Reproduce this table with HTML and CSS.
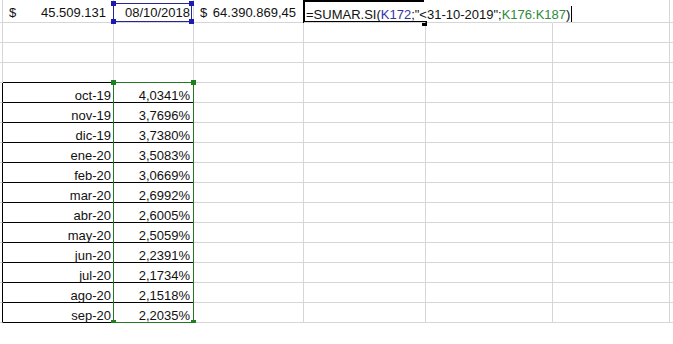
FILE: index.html
```html
<!DOCTYPE html>
<html lang="es">
<head>
<meta charset="utf-8">
<title>Hoja</title>
<link rel="stylesheet" href="styles.css">
</head>
<body>
<div class="sheet">
  <!-- row 1 -->
  <div class="c s top"></div>
  <div class="c top acct"><span>$</span><span>45.509.131</span></div>
  <div class="c top r">08/10/2018</div>
  <div class="c top acct"><span>$</span><span>64.390.869,45</span></div>
  <div class="c top edit noright">=SUMAR.SI(<span class="ref-blue">K172</span>;"&lt;31-10-2019";<span class="ref-green">K176:K187</span>)<span class="caret"></span></div>
  <div class="c top noright"></div>
  <div class="c top"></div>
  <div class="c top"></div>
  <!-- row 2 -->
  <div class="c s"></div><div class="c"></div><div class="c"></div><div class="c"></div><div class="c"></div><div class="c"></div><div class="c"></div><div class="c"></div>
  <!-- row 3 -->
  <div class="c s"></div><div class="c"></div><div class="c"></div><div class="c"></div><div class="c"></div><div class="c"></div><div class="c"></div><div class="c"></div>
  <!-- row 4 -->
  <div class="c s"></div><div class="c above"></div><div class="c above"></div><div class="c"></div><div class="c"></div><div class="c"></div><div class="c"></div><div class="c"></div>
  <!-- table rows -->
  <div class="c s edge"></div><div class="c t r lbl">oct-19</div><div class="c t r pct">4,0341%</div><div class="c"></div><div class="c"></div><div class="c"></div><div class="c"></div><div class="c"></div>
  <div class="c s edge"></div><div class="c t r lbl">nov-19</div><div class="c t r pct">3,7696%</div><div class="c"></div><div class="c"></div><div class="c"></div><div class="c"></div><div class="c"></div>
  <div class="c s edge"></div><div class="c t r lbl">dic-19</div><div class="c t r pct">3,7380%</div><div class="c"></div><div class="c"></div><div class="c"></div><div class="c"></div><div class="c"></div>
  <div class="c s edge"></div><div class="c t r lbl">ene-20</div><div class="c t r pct">3,5083%</div><div class="c"></div><div class="c"></div><div class="c"></div><div class="c"></div><div class="c"></div>
  <div class="c s edge"></div><div class="c t r lbl">feb-20</div><div class="c t r pct">3,0669%</div><div class="c"></div><div class="c"></div><div class="c"></div><div class="c"></div><div class="c"></div>
  <div class="c s edge"></div><div class="c t r lbl">mar-20</div><div class="c t r pct">2,6992%</div><div class="c"></div><div class="c"></div><div class="c"></div><div class="c"></div><div class="c"></div>
  <div class="c s edge"></div><div class="c t r lbl">abr-20</div><div class="c t r pct">2,6005%</div><div class="c"></div><div class="c"></div><div class="c"></div><div class="c"></div><div class="c"></div>
  <div class="c s edge"></div><div class="c t r lbl">may-20</div><div class="c t r pct">2,5059%</div><div class="c"></div><div class="c"></div><div class="c"></div><div class="c"></div><div class="c"></div>
  <div class="c s edge"></div><div class="c t r lbl">jun-20</div><div class="c t r pct">2,2391%</div><div class="c"></div><div class="c"></div><div class="c"></div><div class="c"></div><div class="c"></div>
  <div class="c s edge"></div><div class="c t r lbl">jul-20</div><div class="c t r pct">2,1734%</div><div class="c"></div><div class="c"></div><div class="c"></div><div class="c"></div><div class="c"></div>
  <div class="c s edge"></div><div class="c t r lbl">ago-20</div><div class="c t r pct">2,1518%</div><div class="c"></div><div class="c"></div><div class="c"></div><div class="c"></div><div class="c"></div>
  <div class="c s edge"></div><div class="c t r lbl">sep-20</div><div class="c t r pct">2,2035%</div><div class="c"></div><div class="c"></div><div class="c"></div><div class="c"></div><div class="c"></div>

  <!-- overlays -->
  <div class="hl hl-blue"><span class="h tl"></span><span class="h tr"></span><span class="h bl"></span><span class="h br"></span></div>
  <div class="hl hl-green"><span class="h tl"></span><span class="h tr"></span><span class="h bl"></span><span class="h br"></span></div>
  <div class="edit-box"><span class="fill-handle"></span></div>
</div>
</body>
</html>
```

FILE: styles.css
```css
html, body {
  margin: 0;
  padding: 0;
  background: #ffffff;
}

body {
  font-family: "Liberation Sans", Arial, sans-serif;
  font-size: 13px;
  color: #111111;
}

.sheet {
  position: relative;
  display: grid;
  grid-template-columns: 3px 111px 80px 110px 122px 127px 117px 1fr;
  grid-template-rows: 23px repeat(15, 20px);
}

.c {
  box-sizing: border-box;
  border-right: 1px solid #d6d6d6;
  border-bottom: 1px solid #d6d6d6;
  line-height: 13px;
  padding: 6px 3px 0 3px;
  white-space: nowrap;
  min-width: 0;
}

.c.top {
  padding-top: 6px;
}

.c.s {
  padding: 0;
}

.r {
  text-align: right;
}

.acct {
  display: flex;
  justify-content: space-between;
  padding-left: 6px;
  padding-right: 7px;
}

.noright {
  border-right-color: transparent;
}

.edit {
  position: relative;
  z-index: 3;
  overflow: visible;
  padding-left: 2px;
  color: #111111;
}

.ref-blue {
  color: #3434a8;
}

.ref-green {
  color: #2f8a3a;
}

.caret {
  display: inline-block;
  width: 1px;
  height: 16px;
  margin-left: 1px;
  background: #000000;
  vertical-align: -3px;
}

.above {
  border-bottom-color: #000000;
}

.edge {
  border-right-color: #000000;
}

.t {
  border-right-color: #000000;
  border-bottom-color: #000000;
}

.lbl {
  padding-right: 2px;
}

.pct {
  padding-right: 3px;
}

/* range highlights drawn over the grid */
.hl {
  position: absolute;
  box-sizing: border-box;
  z-index: 2;
}

.hl-blue {
  grid-column: 3;
  grid-row: 1;
  left: -1px;
  top: 3px;
  width: 79px;
  height: 19px;
  border: 1px solid #25259a;
}

.hl-green {
  grid-column: 3;
  grid-row: 5 / 17;
  left: -1px;
  top: -1px;
  width: 81px;
  height: 241px;
  border: 1px solid #237a23;
}

.h {
  position: absolute;
  width: 5px;
  height: 5px;
}

.hl-blue .h {
  background: #1c1cb4;
}

.hl-green .h {
  background: #1f7f1f;
}

.h.tl { left: -3px; top: -3px; }
.h.tr { right: -3px; top: -3px; }
.h.bl { left: -3px; bottom: -3px; }
.h.br { right: -3px; bottom: -3px; }

.edit-box {
  position: absolute;
  grid-column: 5;
  grid-row: 1;
  left: -1px;
  top: 0;
  width: 121px;
  height: 23px;
  box-sizing: border-box;
  border: 2px solid #000000;
  border-right: none;
  z-index: 2;
}

.fill-handle {
  position: absolute;
  left: 117px;
  top: 19px;
  width: 5px;
  height: 5px;
  background: #000000;
}
```
